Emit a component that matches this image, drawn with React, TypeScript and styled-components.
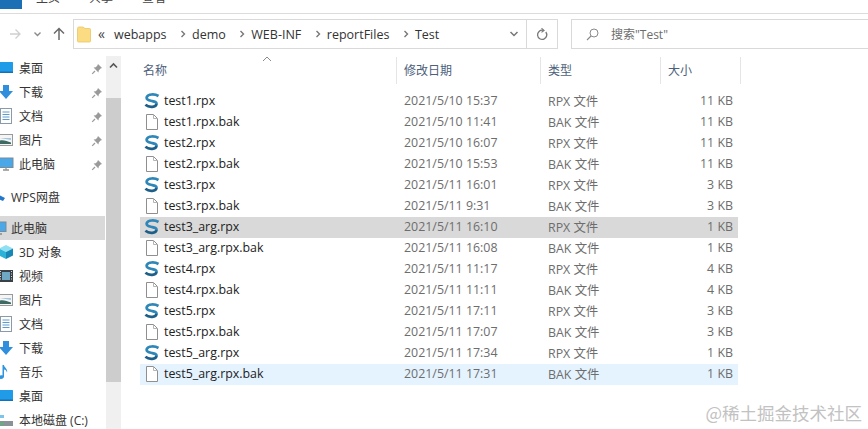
import React from "react";
import styled, { createGlobalStyle } from "styled-components";

const Global = createGlobalStyle`
  html, body { margin: 0; padding: 0; background: #fff; }
  body { font-family: "Open Sans", "Noto Sans CJK SC", sans-serif; font-size: 12px; color: #333; }
`;

const Page = styled.div`
  position: relative;
  width: 868px;
  height: 429px;
  overflow: hidden;
  display: flex;
  flex-direction: column;
  background: #fff;
`;

const Ribbon = styled.div`
  height: 13px;
  border-bottom: 1px solid #dcdcdc;
  display: flex;
  overflow: hidden;
  flex: none;
`;
const FileTab = styled.div`
  width: 22px;
  height: 9px;
  background: #1a6fb5;
`;
const RibbonTabs = styled.div`
  display: flex;
  gap: 29px;
  margin: -11px 0 0 14px;
  font-size: 12px;
  line-height: 17px;
  color: #444;
`;

const Toolbar = styled.div`
  height: 30px;
  margin-top: 5px;
  display: flex;
  align-items: center;
  flex: none;
`;
const NavIcons = styled.div`
  width: 73px;
  padding-left: 9px;
  box-sizing: border-box;
  display: flex;
  align-items: center;
  gap: 7px;
`;
const AddressBar = styled.div`
  width: 485px;
  height: 30px;
  box-sizing: border-box;
  border: 1px solid #d9d9d9;
  display: flex;
  align-items: center;
`;
const Crumbs = styled.div`
  flex: 1;
  display: flex;
  align-items: center;
  padding-left: 3px;
  font-size: 12.5px;
  color: #333;
`;
const Crumb = styled.span`
  margin: 0 12.5px 0 0;
`;
const Sep = styled.span`
  width: 13px;
  margin-right: 0;
  display: flex;
  align-items: center;
`;
const Quote = styled.span`
  margin: 0 7px 0 7px;
  width: 9px;
  font-size: 14px;
  line-height: 14px;
  color: #444;
`;
const Drop = styled.div`
  width: 24px;
  height: 100%;
  display: flex;
  align-items: center;
  justify-content: center;
`;
const Refresh = styled.div`
  width: 30px;
  height: 100%;
  border-left: 1px solid #d9d9d9;
  display: flex;
  align-items: center;
  justify-content: center;
`;
const SearchBox = styled.div`
  margin-left: 13px;
  flex: 1;
  height: 30px;
  box-sizing: border-box;
  border: 1px solid #d9d9d9;
  border-right: 0;
  display: flex;
  align-items: center;
  gap: 12px;
  padding-left: 14px;
  color: #6d6d6d;
  font-size: 12px;
`;

const Main = styled.div`
  flex: 1;
  display: flex;
  margin-top: 7px;
  min-height: 0;
`;
const Sidebar = styled.div`
  width: 106px;
  flex: none;
  display: flex;
  flex-direction: column;
`;
const NavRow = styled.div<{ $active?: boolean; $indent?: boolean; $gapTop?: number }>`
  height: 24px;
  flex: none;
  margin-top: ${(p) => p.$gapTop ?? 0}px;
  width: 105px;
  display: flex;
  align-items: center;
  background: ${(p) => (p.$active ? "#d9d9d9" : "transparent")};
  padding-left: ${(p) => (p.$indent ? 11 : 19)}px;
  box-sizing: border-box;
  font-size: 12px;
  color: #333;
  position: relative;
  white-space: nowrap;
`;
const NavIcon = styled.span<{ $x: number }>`
  position: absolute;
  left: ${(p) => p.$x}px;
  top: 4px;
  width: 16px;
  height: 16px;
  display: block;
`;
const Pin = styled.span`
  position: absolute;
  left: 91px;
  top: 6px;
  width: 12px;
  height: 12px;
`;

const Scrollbar = styled.div`
  width: 15px;
  flex: none;
  background: #f0f0f0;
  display: flex;
  flex-direction: column;
`;
const ScrollUp = styled.div`
  height: 20px;
  display: flex;
  justify-content: center;
  padding-top: 6px;
  box-sizing: border-box;
`;
const Thumb = styled.div`
  margin-top: 22px;
  height: 284px;
  background: #cdcdcd;
`;

const ListPane = styled.div`
  position: relative;
  flex: 1;
  padding-left: 19px;
  min-width: 0;
`;
const SortArrow = styled.span`
  position: absolute;
  left: 141px;
  top: 0;
  line-height: 0;
`;
const Header = styled.div`
  display: grid;
  grid-template-columns: 257px 144px 120px 80px;
  height: 27px;
  margin-bottom: 7px;
  margin-top: 1px;
`;
const HeaderCell = styled.div<{ $pad: number }>`
  border-right: 1px solid #e5e5e5;
  padding-left: ${(p) => p.$pad}px;
  display: flex;
  align-items: center;
  color: #4c607a;
  font-size: 12px;
  padding-bottom: 1px;
  box-sizing: border-box;
`;
const Row = styled.div<{ $state?: "selected" | "hover" }>`
  display: grid;
  grid-template-columns: 264px 144px 100px 85px;
  width: 598px;
  box-sizing: border-box;
  padding-right: 5px;
  padding-bottom: 2px;
  height: 21px;
  align-items: center;
  background: ${(p) => (p.$state === "selected" ? "#d9d9d9" : p.$state === "hover" ? "#e5f3ff" : "transparent")};
  font-size: 12.4px;
`;
const NameCell = styled.div`
  display: flex;
  align-items: center;
  gap: 4px;
  padding-left: 4px;
  color: #222;
  white-space: nowrap;
`;
const Meta = styled.div`
  color: #6d6d6d;
  white-space: nowrap;
`;
const SizeCell = styled(Meta)`
  text-align: right;
`;
const Watermark = styled.div`
  position: absolute;
  right: 6px;
  bottom: 5px;
  font-family: "Noto Sans CJK SC", sans-serif;
  font-weight: 400;
  font-size: 17.5px;
  line-height: 22px;
  color: #c2c2c2;
  white-space: nowrap;
`;

const Chevron = () => (
  <svg width="8" height="10" viewBox="0 0 8 10"><path d="M2.5 2 L5.5 5 L2.5 8" fill="none" stroke="#777" strokeWidth="1.4" /></svg>
);

const SIcon = () => (
  <svg width="16" height="16" viewBox="0 0 16 16" style={{ flex: "none" }}>
    <path d="M14.5 3 C10.5 0.6 4 1 2.8 4 C1.8 7 6 7.4 8 8 C10.2 8.5 13 9 12.5 11.2" fill="none" stroke="#2f87b8" strokeWidth="2.7" />
    <path d="M12.5 11 C12 14.2 5.5 15.2 1.4 11.8" fill="none" stroke="#1d5f88" strokeWidth="2.7" />
  </svg>
);
const PageIcon = () => (
  <svg width="16" height="16" viewBox="0 0 16 16" style={{ flex: "none" }}>
    <path d="M2.5 0.5 H9.5 L13.5 4.5 V15.5 H2.5 Z" fill="#fff" stroke="#8f8f8f" />
    <path d="M9.5 0.5 V4.5 H13.5" fill="none" stroke="#b5b5b5" />
  </svg>
);
const PinIcon = () => (
  <svg width="12" height="12" viewBox="0 0 12 12">
    <path d="M7 1 L11 5 L9.6 5.6 L7.8 7.4 L7.4 9.6 L2.6 4.6 L4.8 4.2 L6.4 2.4 Z" fill="#9a9a9a" />
    <path d="M4 8 L1.2 10.8" stroke="#9a9a9a" strokeWidth="1.2" />
  </svg>
);
const DesktopIcon = () => (
  <svg width="16" height="16" viewBox="0 0 16 16"><rect x="1" y="2" width="14" height="10" rx="0.5" fill="#1f9be8" /><rect x="1" y="11.5" width="14" height="1.5" fill="#1570b5" /></svg>
);
const DownIcon = () => (
  <svg width="16" height="16" viewBox="0 0 16 16"><path d="M5 1 H11 V7 H15 L8 15 L1 7 H5 Z" fill="#2f8fdc" /></svg>
);
const DocIcon = () => (
  <svg width="16" height="16" viewBox="0 0 16 16"><rect x="2.5" y="0.5" width="11" height="15" fill="#fff" stroke="#8a9aa8" /><path d="M4.5 4 H11.5 M4.5 6.5 H11.5 M4.5 9 H11.5 M4.5 11.5 H11.5" stroke="#5b9bd0" strokeWidth="1" /></svg>
);
const PictureIcon = () => (
  <svg width="16" height="16" viewBox="0 0 16 16"><rect x="0.5" y="2.5" width="14" height="11" fill="#f5f5f5" stroke="#9a9a9a" /><path d="M2 6 H13 V8 Z" fill="#9fc7de" /><path d="M2 12 V8.5 C6 7.5 9 9.5 13 10.5 V12 Z" fill="#3d6a63" /></svg>
);
const PcIcon = () => (
  <svg width="16" height="16" viewBox="0 0 16 16"><rect x="1" y="2" width="14" height="9.5" fill="#4aa8e8" stroke="#7a8a99" /><path d="M5 14 H11" stroke="#8a8a8a" strokeWidth="1.4" /><path d="M8 11.5 V14" stroke="#9a9a9a" strokeWidth="1.4" /></svg>
);
const CloudIcon = () => (
  <svg width="16" height="16" viewBox="0 0 16 16"><path d="M4 6.5 L9 9 L7 12 L3.5 10.5 Z" fill="#2477c9" /></svg>
);
const CubeIcon = () => (
  <svg width="16" height="16" viewBox="0 0 16 16"><path d="M8 1 L15 4.5 L8 8 L1 4.5 Z" fill="#8fe0f2" /><path d="M1 4.5 L8 8 V15 L1 11.5 Z" fill="#2bb2d6" /><path d="M15 4.5 L8 8 V15 L15 11.5 Z" fill="#1788b5" /></svg>
);
const VideoIcon = () => (
  <svg width="16" height="16" viewBox="0 0 16 16"><rect x="1" y="2" width="14" height="12" fill="#3a4048" /><rect x="4" y="4" width="8" height="8" fill="#6fa8c4" /><path d="M2 3.5 H3 M2 6 H3 M2 8.5 H3 M2 11 H3 M13 3.5 H14 M13 6 H14 M13 8.5 H14 M13 11 H14" stroke="#d8d8d8" /></svg>
);
const MusicIcon = () => (
  <svg width="16" height="16" viewBox="0 0 16 16"><path d="M6.5 1 H8 C8.4 4 12 4.5 11 8.5 C10.5 6.5 9.4 5.8 8 5.5 V12.5 C8 14.4 5.8 15.4 4 14.8 C2.6 14.2 2.8 12.4 4.2 11.6 C5 11.2 5.9 11.1 6.5 11.4 Z" fill="#2f95e0" /></svg>
);
const DiskIcon = () => (
  <svg width="16" height="16" viewBox="0 0 16 16"><path d="M2 3 H6 V6 H2 Z" fill="#7cc4ea" /><rect x="1" y="9" width="14" height="5" fill="#8a9299" /><rect x="2" y="11" width="4" height="1.5" fill="#49c06a" /></svg>
);

type NavItem = { label: string; icon: React.ReactNode; x?: number; pin?: boolean; gap?: number; active?: boolean; indent?: boolean };
const navItems: NavItem[] = [
  { label: "桌面", icon: <DesktopIcon />, pin: true },
  { label: "下载", icon: <DownIcon />, pin: true },
  { label: "文档", icon: <DocIcon />, pin: true },
  { label: "图片", icon: <PictureIcon />, pin: true },
  { label: "此电脑", icon: <PcIcon />, pin: true },
  { label: "WPS网盘", icon: <CloudIcon />, indent: true, gap: 9, x: -4 },
  { label: "此电脑", icon: <PcIcon />, indent: true, active: true, gap: 7, x: -9 },
  { label: "3D 对象", icon: <CubeIcon /> },
  { label: "视频", icon: <VideoIcon /> },
  { label: "图片", icon: <PictureIcon /> },
  { label: "文档", icon: <DocIcon /> },
  { label: "下载", icon: <DownIcon /> },
  { label: "音乐", icon: <MusicIcon />, x: -4 },
  { label: "桌面", icon: <DesktopIcon /> },
  { label: "本地磁盘 (C:)", icon: <DiskIcon /> },
];

type FileRow = [string, string, number, "selected" | "hover" | undefined];
const files: FileRow[] = [
  ["test1.rpx", "2021/5/10 15:37", 11, undefined],
  ["test1.rpx.bak", "2021/5/10 11:41", 11, undefined],
  ["test2.rpx", "2021/5/10 16:07", 11, undefined],
  ["test2.rpx.bak", "2021/5/10 15:53", 11, undefined],
  ["test3.rpx", "2021/5/11 16:01", 3, undefined],
  ["test3.rpx.bak", "2021/5/11 9:31", 3, undefined],
  ["test3_arg.rpx", "2021/5/11 16:10", 1, "selected"],
  ["test3_arg.rpx.bak", "2021/5/11 16:08", 1, undefined],
  ["test4.rpx", "2021/5/11 11:17", 4, undefined],
  ["test4.rpx.bak", "2021/5/11 11:11", 4, undefined],
  ["test5.rpx", "2021/5/11 17:11", 3, undefined],
  ["test5.rpx.bak", "2021/5/11 17:07", 3, undefined],
  ["test5_arg.rpx", "2021/5/11 17:34", 1, undefined],
  ["test5_arg.rpx.bak", "2021/5/11 17:31", 1, "hover"],
];

const crumbs = ["webapps", "demo", "WEB-INF", "reportFiles", "Test"];

export default function App() {
  return (
    <Page>
      <Global />
      <Ribbon>
        <FileTab />
        <RibbonTabs>
          <span>主页</span>
          <span>共享</span>
          <span>查看</span>
        </RibbonTabs>
      </Ribbon>
      <Toolbar>
        <NavIcons>
          <svg width="12" height="12" viewBox="0 0 12 12"><path d="M1 6 H11 M6.5 1.5 L11 6 L6.5 10.5" fill="none" stroke="#cfcfcf" strokeWidth="1.3" /></svg>
          <svg width="9" height="8" viewBox="0 0 9 8" style={{ marginLeft: 5 }}><path d="M1.5 2.5 L4.5 5.5 L7.5 2.5" fill="none" stroke="#8a8a8a" strokeWidth="1.4" /></svg>
          <svg width="12" height="14" viewBox="0 0 12 14" style={{ marginLeft: 4 }}><path d="M6 13 V1.5 M1 6.5 L6 1.5 L11 6.5" fill="none" stroke="#6a6a6a" strokeWidth="1.5" /></svg>
        </NavIcons>
        <AddressBar>
          <Crumbs>
            <svg width="14" height="17" viewBox="0 0 14 17" style={{ flex: "none" }}>
              <path d="M0.5 2.5 Q0.5 1 2 1 H6 L8 2.5 H12.5 Q13.5 2.5 13.5 3.5 V15 Q13.5 16 12.5 16 H1.5 Q0.5 16 0.5 15 Z" fill="#fbdc83" stroke="#e8c564" strokeWidth="0.8" />
            </svg>
            <Quote>«</Quote>
            {crumbs.map((c, i) => (
              <React.Fragment key={c}>
                <Crumb>{c}</Crumb>
                {i < crumbs.length - 1 && <Sep><Chevron /></Sep>}
              </React.Fragment>
            ))}
          </Crumbs>
          <Drop>
            <svg width="10" height="8" viewBox="0 0 10 8"><path d="M1.5 2 L5 5.5 L8.5 2" fill="none" stroke="#777" strokeWidth="1.5" /></svg>
          </Drop>
          <Refresh>
            <svg width="12" height="13" viewBox="0 0 12 13"><path d="M9.8 4 A4.6 4.6 0 1 1 7 2.3" fill="none" stroke="#777" strokeWidth="1.3" /><path d="M5.5 0.3 L8 2.4 L5.5 4.4" fill="none" stroke="#777" strokeWidth="1.2" /></svg>
          </Refresh>
        </AddressBar>
        <SearchBox>
          <svg width="13" height="13" viewBox="0 0 13 13"><circle cx="8" cy="5" r="4" fill="none" stroke="#8a8a8a" /><path d="M5 8 L1 12" stroke="#8a8a8a" strokeWidth="1.1" /></svg>
          <span>搜索"Test"</span>
        </SearchBox>
      </Toolbar>
      <Main>
        <Sidebar>
          {navItems.map((n, i) => (
            <NavRow key={i} $active={n.active} $indent={n.indent} $gapTop={n.gap}>
              <NavIcon $x={n.x ?? -2}>{n.icon}</NavIcon>
              {n.label}
              {n.pin && <Pin><PinIcon /></Pin>}
            </NavRow>
          ))}
        </Sidebar>
        <Scrollbar>
          <ScrollUp>
            <svg width="9" height="7" viewBox="0 0 9 7"><path d="M1 5.5 L4.5 2 L8 5.5" fill="none" stroke="#555" strokeWidth="1.6" /></svg>
          </ScrollUp>
          <Thumb />
        </Scrollbar>
        <ListPane>
          <SortArrow>
            <svg width="10" height="6" viewBox="0 0 10 6"><path d="M1 5 L5 1 L9 5" fill="none" stroke="#8a8a8a" /></svg>
          </SortArrow>
          <Header>
            <HeaderCell $pad={3}>名称</HeaderCell>
            <HeaderCell $pad={7}>修改日期</HeaderCell>
            <HeaderCell $pad={7}>类型</HeaderCell>
            <HeaderCell $pad={7}>大小</HeaderCell>
          </Header>
          {files.map(([name, date, size, state]) => (
            <Row key={name} $state={state}>
              <NameCell>
                {name.endsWith(".bak") ? <PageIcon /> : <SIcon />}
                <span>{name}</span>
              </NameCell>
              <Meta>{date}</Meta>
              <Meta>{name.endsWith(".bak") ? "BAK 文件" : "RPX 文件"}</Meta>
              <SizeCell>{size} KB</SizeCell>
            </Row>
          ))}
        </ListPane>
      </Main>
      <Watermark>@稀土掘金技术社区</Watermark>
    </Page>
  );
}
